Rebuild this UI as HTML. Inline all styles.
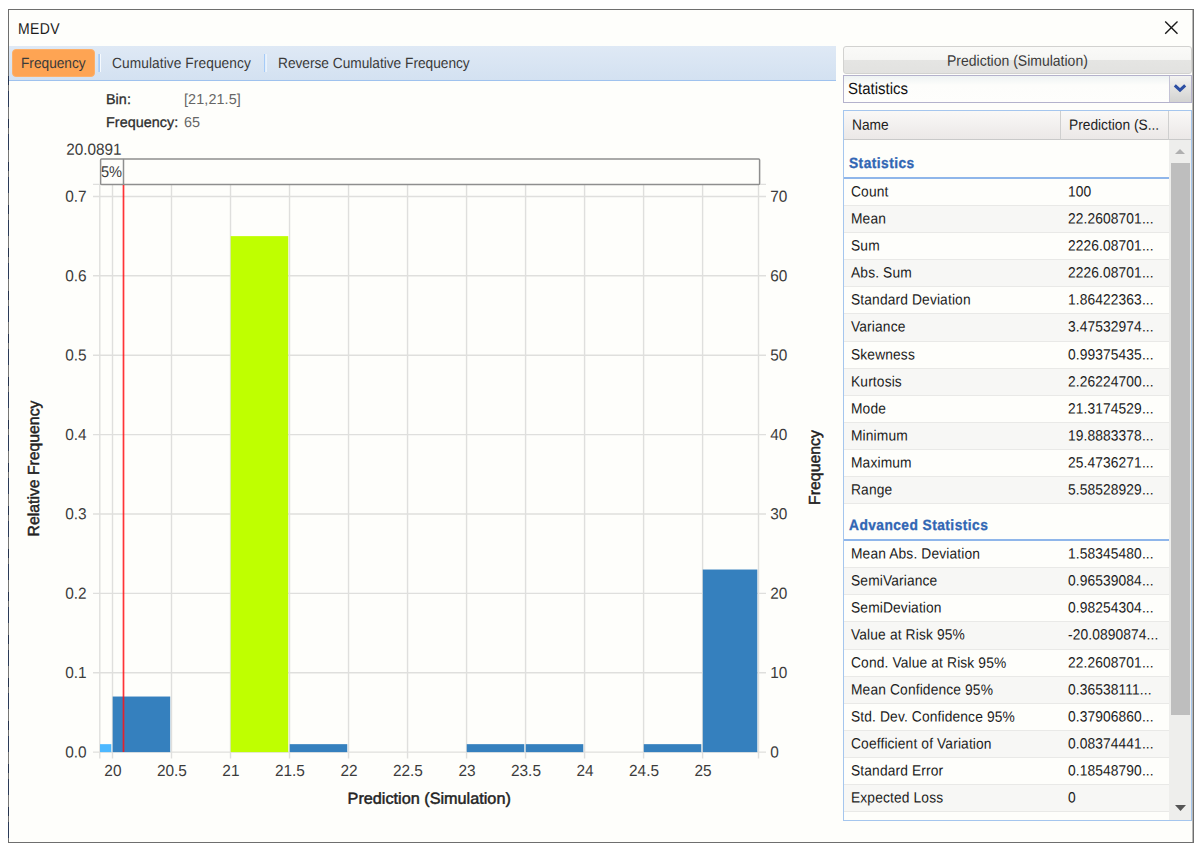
<!DOCTYPE html>
<html lang="en"><head><meta charset="utf-8"><title>MEDV</title>
<style>
*{box-sizing:border-box;margin:0;padding:0}
html,body{width:1200px;height:852px;overflow:hidden;background:#fff}
body{font-family:"Liberation Sans",sans-serif;color:#1e1e1e;position:relative}
.win{position:absolute;left:8px;top:9px;width:1186px;height:834px;border:1px solid #6e6e6e;background:#fefefb}
.abs{position:absolute;white-space:nowrap}
.lb{left:8px;top:76px;width:1px;height:764px;background:repeating-linear-gradient(#25324d 0 9px,#6e6e6e 9px 15px,#2b3a58 15px 31px,#777 31px 43px)}
.title{left:17.5px;top:20px;font-size:14px;line-height:18px;letter-spacing:0.4px;color:#1c1c1c;transform:scaleY(1.13) rotate(0.03deg);transform-origin:0 78%}
.tb{left:9px;top:46px;width:827px;height:35px;background:linear-gradient(#dfe9f5,#d3e1f1);border-bottom:1px solid #9fc2ee}
.btn{left:12px;top:49px;width:83px;height:28px;border-radius:4px;background:#fea453;border:1px solid #fdb06a}
.tbt{font-size:13.7px;line-height:16px;top:56px;color:#3a3a3a}
.sep{top:54px;width:3px;height:18px}
.sep.s1{background:linear-gradient(to right,#b4d3f7 0 1px,#a6cbf7 1px 2px,#f6fafe 2px 3px)}
.sep.s2{background:linear-gradient(to right,#a6cbf7 0 1px,#e1eefc 1px 2px,#eaf2fb 2px 3px)}
.sy{display:inline-block;transform:scaleY(1.08) rotate(0.03deg);transform-origin:0 78%}
.info{font-size:14.35px;line-height:16px;letter-spacing:0.05px;transform:rotate(0.03deg);transform-origin:0 78%;-webkit-text-stroke:0.3px #2e2e2e;color:#2e2e2e}
.infov{font-size:14.4px;line-height:16px;color:#666;letter-spacing:0.1px;transform:rotate(0.03deg);transform-origin:0 78%}
.hdr{left:843px;top:46px;width:349px;height:28px;border:1px solid #d2d2d0;border-radius:3px;background:linear-gradient(#fafaf8 0,#f6f6f4 50%,#e5e5e3 50%,#e2e2e0 100%);text-align:center;font-size:14px;line-height:27px;color:#3a3a3a}
.hdr .sy{position:relative;top:0.5px}
.th .sy{position:relative;top:0.5px}
.combo{left:843px;top:75px;width:349px;height:28px;border:1px solid #b4b2cc;background:linear-gradient(#eef3f3 0,#fdfdfb 35%,#fefefc 100%)}
.combo .t{left:4px;top:4px;font-size:15px;line-height:18px;color:#111}
.combo .dd{right:0;top:0;width:22px;height:26px;background:linear-gradient(#f3f3f1,#e4e4e2 45%,#d3d3d1);border-left:1px solid #c4c3d6}
.tbl{left:843px;top:110px;width:349px;height:711px;border:1px solid #a5c6ee;background:#fefefb;overflow:hidden}
.th{left:0;top:0;height:29px;background:linear-gradient(#f9f8f7,#ebe8e7);border-bottom:1px solid #c9c9c9;border-right:1px solid #cfcfcf;font-size:13.75px;line-height:27px;color:#222}
.rows{position:absolute;left:0;top:29px;width:325px}
.grp{height:39px;border-bottom:2px solid #8fb6ea;font-weight:bold;font-size:13.75px;letter-spacing:0.45px;color:#3166b4;-webkit-text-stroke:0.3px #3166b4;padding:15.5px 0 0 5px;line-height:16px}
.grp.g2{height:37px;padding-top:13.5px}
.row{height:27.1px;border-bottom:1px solid #e9e9e7;font-size:13.8px;line-height:16px;position:relative;color:#1c1c1c}
.row.alt{background:#f7f7f5}
.row span{position:absolute;top:5px;white-space:nowrap;transform:translateY(0.6px) scaleY(1.08) rotate(0.03deg);transform-origin:0 78%}
.row .n{left:6.9px;letter-spacing:0.13px}
.row .v{left:224px;letter-spacing:0.1px}
.sb{left:325px;top:29px;width:22px;height:680px;background:#eeeeec}
.thumb{left:2px;top:23px;width:19px;height:552px;background:#bebebe}
</style></head>
<body>
<div class="win"></div>
<div class="abs" style="left:1192px;top:10px;width:1px;height:832px;background:#b9b9b7"></div>
<div class="abs lb"></div>
<div class="abs title">MEDV</div>
<svg class="abs" style="left:1163px;top:19px" width="17" height="17" viewBox="0 0 17 17"><path d="M2.2 2.5 L14.5 14.7 M14.5 2.5 L2.2 14.7" stroke="#1a1a1a" stroke-width="1.4" fill="none"/></svg>
<div class="abs tb"></div>
<div class="abs btn"></div>
<div class="abs tbt" style="left:21px"><span class="sy">Frequency</span></div>
<div class="abs sep s1" style="left:98px"></div>
<div class="abs tbt" style="left:112.4px;letter-spacing:0.1px"><span class="sy">Cumulative Frequency</span></div>
<div class="abs sep s2" style="left:264px"></div>
<div class="abs tbt" style="left:278px"><span class="sy">Reverse Cumulative Frequency</span></div>
<div class="abs info" style="left:105.7px;top:90.7px">Bin:</div>
<div class="abs infov" style="left:183.6px;top:90.7px">[21,21.5]</div>
<div class="abs info" style="left:105.7px;top:114.2px">Frequency:</div>
<div class="abs infov" style="left:183.6px;top:114.2px">65</div>
<svg class="abs" style="left:0;top:0" width="840" height="852" viewBox="0 0 840 852" font-family="'Liberation Sans',sans-serif"><line x1="93" x2="766" y1="752.10" y2="752.10" stroke="#dfdfdd" stroke-width="1.4"/><line x1="93" x2="766" y1="672.72" y2="672.72" stroke="#dfdfdd" stroke-width="1.4"/><line x1="93" x2="766" y1="593.34" y2="593.34" stroke="#dfdfdd" stroke-width="1.4"/><line x1="93" x2="766" y1="513.96" y2="513.96" stroke="#dfdfdd" stroke-width="1.4"/><line x1="93" x2="766" y1="434.58" y2="434.58" stroke="#dfdfdd" stroke-width="1.4"/><line x1="93" x2="766" y1="355.20" y2="355.20" stroke="#dfdfdd" stroke-width="1.4"/><line x1="93" x2="766" y1="275.82" y2="275.82" stroke="#dfdfdd" stroke-width="1.4"/><line x1="93" x2="766" y1="196.44" y2="196.44" stroke="#dfdfdd" stroke-width="1.4"/><line x1="93" x2="766" y1="184.4" y2="184.4" stroke="#dfdfdd" stroke-width="1.4"/><line x1="112.50" x2="112.50" y1="184.4" y2="758.5" stroke="#dfdfdd" stroke-width="1.4"/><line x1="171.51" x2="171.51" y1="184.4" y2="758.5" stroke="#dfdfdd" stroke-width="1.4"/><line x1="230.52" x2="230.52" y1="184.4" y2="758.5" stroke="#dfdfdd" stroke-width="1.4"/><line x1="289.53" x2="289.53" y1="184.4" y2="758.5" stroke="#dfdfdd" stroke-width="1.4"/><line x1="348.54" x2="348.54" y1="184.4" y2="758.5" stroke="#dfdfdd" stroke-width="1.4"/><line x1="407.55" x2="407.55" y1="184.4" y2="758.5" stroke="#dfdfdd" stroke-width="1.4"/><line x1="466.56" x2="466.56" y1="184.4" y2="758.5" stroke="#dfdfdd" stroke-width="1.4"/><line x1="525.57" x2="525.57" y1="184.4" y2="758.5" stroke="#dfdfdd" stroke-width="1.4"/><line x1="584.58" x2="584.58" y1="184.4" y2="758.5" stroke="#dfdfdd" stroke-width="1.4"/><line x1="643.59" x2="643.59" y1="184.4" y2="758.5" stroke="#dfdfdd" stroke-width="1.4"/><line x1="702.60" x2="702.60" y1="184.4" y2="758.5" stroke="#dfdfdd" stroke-width="1.4"/><line x1="99.8" x2="99.8" y1="184.4" y2="758.5" stroke="#dfdfdd" stroke-width="1.4"/><line x1="758.5" x2="758.5" y1="184.4" y2="758.5" stroke="#dfdfdd" stroke-width="1.4"/><rect x="100.00" y="744.16" width="11.30" height="7.94" fill="#4db8ff"/><rect x="112.70" y="696.53" width="57.51" height="55.57" fill="#3580be"/><rect x="230.72" y="236.13" width="57.51" height="515.97" fill="#bfff00"/><rect x="289.73" y="744.16" width="57.51" height="7.94" fill="#3580be"/><rect x="466.76" y="744.16" width="57.51" height="7.94" fill="#3580be"/><rect x="525.77" y="744.16" width="57.51" height="7.94" fill="#3580be"/><rect x="643.79" y="744.16" width="57.51" height="7.94" fill="#3580be"/><rect x="702.80" y="569.53" width="54.50" height="182.57" fill="#3580be"/><rect x="100.6" y="158.9" width="659" height="25.6" rx="1" fill="#fefefb" stroke="#8e8e8e" stroke-width="1.5"/><line x1="123.5" x2="123.5" y1="158.9" y2="184.5" stroke="#8e8e8e" stroke-width="1.5"/><line x1="123.5" x2="123.5" y1="185" y2="752.1" stroke="#ff1216" stroke-opacity="0.86" stroke-width="1.7"/><text transform="translate(101.00,177.00) scale(1.0,1.07) rotate(0.03)" font-size="14.6" text-anchor="start" fill="#3c3c3c">5%</text><text transform="translate(66.20,154.80) scale(1.015,1.07) rotate(0.03)" font-size="15.1" text-anchor="start" fill="#3c3c3c">20.0891</text><text transform="translate(86.60,757.50) scale(1.02,1.06) rotate(0.03)" font-size="15.1" text-anchor="end" fill="#3c3c3c">0.0</text><text transform="translate(770.20,757.50) scale(1.02,1.06) rotate(0.03)" font-size="15.1" text-anchor="start" fill="#3c3c3c">0</text><text transform="translate(86.60,678.12) scale(1.02,1.06) rotate(0.03)" font-size="15.1" text-anchor="end" fill="#3c3c3c">0.1</text><text transform="translate(770.20,678.12) scale(1.02,1.06) rotate(0.03)" font-size="15.1" text-anchor="start" fill="#3c3c3c">10</text><text transform="translate(86.60,598.74) scale(1.02,1.06) rotate(0.03)" font-size="15.1" text-anchor="end" fill="#3c3c3c">0.2</text><text transform="translate(770.20,598.74) scale(1.02,1.06) rotate(0.03)" font-size="15.1" text-anchor="start" fill="#3c3c3c">20</text><text transform="translate(86.60,519.36) scale(1.02,1.06) rotate(0.03)" font-size="15.1" text-anchor="end" fill="#3c3c3c">0.3</text><text transform="translate(770.20,519.36) scale(1.02,1.06) rotate(0.03)" font-size="15.1" text-anchor="start" fill="#3c3c3c">30</text><text transform="translate(86.60,439.98) scale(1.02,1.06) rotate(0.03)" font-size="15.1" text-anchor="end" fill="#3c3c3c">0.4</text><text transform="translate(770.20,439.98) scale(1.02,1.06) rotate(0.03)" font-size="15.1" text-anchor="start" fill="#3c3c3c">40</text><text transform="translate(86.60,360.60) scale(1.02,1.06) rotate(0.03)" font-size="15.1" text-anchor="end" fill="#3c3c3c">0.5</text><text transform="translate(770.20,360.60) scale(1.02,1.06) rotate(0.03)" font-size="15.1" text-anchor="start" fill="#3c3c3c">50</text><text transform="translate(86.60,281.22) scale(1.02,1.06) rotate(0.03)" font-size="15.1" text-anchor="end" fill="#3c3c3c">0.6</text><text transform="translate(770.20,281.22) scale(1.02,1.06) rotate(0.03)" font-size="15.1" text-anchor="start" fill="#3c3c3c">60</text><text transform="translate(86.60,201.84) scale(1.02,1.06) rotate(0.03)" font-size="15.1" text-anchor="end" fill="#3c3c3c">0.7</text><text transform="translate(770.20,201.84) scale(1.02,1.06) rotate(0.03)" font-size="15.1" text-anchor="start" fill="#3c3c3c">70</text><text transform="translate(112.90,775.90) scale(1.02,1.06) rotate(0.03)" font-size="15.1" text-anchor="middle" fill="#3c3c3c">20</text><text transform="translate(171.91,775.90) scale(1.02,1.06) rotate(0.03)" font-size="15.1" text-anchor="middle" fill="#3c3c3c">20.5</text><text transform="translate(230.92,775.90) scale(1.02,1.06) rotate(0.03)" font-size="15.1" text-anchor="middle" fill="#3c3c3c">21</text><text transform="translate(289.93,775.90) scale(1.02,1.06) rotate(0.03)" font-size="15.1" text-anchor="middle" fill="#3c3c3c">21.5</text><text transform="translate(348.94,775.90) scale(1.02,1.06) rotate(0.03)" font-size="15.1" text-anchor="middle" fill="#3c3c3c">22</text><text transform="translate(407.95,775.90) scale(1.02,1.06) rotate(0.03)" font-size="15.1" text-anchor="middle" fill="#3c3c3c">22.5</text><text transform="translate(466.96,775.90) scale(1.02,1.06) rotate(0.03)" font-size="15.1" text-anchor="middle" fill="#3c3c3c">23</text><text transform="translate(525.97,775.90) scale(1.02,1.06) rotate(0.03)" font-size="15.1" text-anchor="middle" fill="#3c3c3c">23.5</text><text transform="translate(584.98,775.90) scale(1.02,1.06) rotate(0.03)" font-size="15.1" text-anchor="middle" fill="#3c3c3c">24</text><text transform="translate(643.99,775.90) scale(1.02,1.06) rotate(0.03)" font-size="15.1" text-anchor="middle" fill="#3c3c3c">24.5</text><text transform="translate(703.00,775.90) scale(1.02,1.06) rotate(0.03)" font-size="15.1" text-anchor="middle" fill="#3c3c3c">25</text><text transform="translate(429.20,803.70) scale(1.015,1.0) rotate(0.03)" font-size="16" text-anchor="middle" fill="#222" stroke="#222" stroke-width="0.45" stroke-linejoin="round">Prediction (Simulation)</text><text transform="translate(39.10,468.50) rotate(-90) scale(0.986,1.0) rotate(0.03)" font-size="16" text-anchor="middle" fill="#222" stroke="#222" stroke-width="0.45" stroke-linejoin="round">Relative Frequency</text><text transform="translate(820.00,467.50) rotate(-90) scale(0.99,1.0) rotate(0.03)" font-size="16" text-anchor="middle" fill="#222" stroke="#222" stroke-width="0.45" stroke-linejoin="round">Frequency</text></svg>
<div class="abs hdr"><span class="sy">Prediction (Simulation)</span></div>
<div class="abs combo"><div class="abs t"><span class="sy">Statistics</span></div><div class="abs dd"><svg class="abs" style="left:3.2px;top:7.7px" width="14" height="10" viewBox="0 0 14 10"><path d="M1.8 1.4 L7 6.2 L12.2 1.4" stroke="#2c4fa3" stroke-width="3" fill="none"/></svg></div></div>
<div class="abs tbl">
 <div class="abs th" style="width:217px;padding-left:7.8px"><span class="sy">Name</span></div>
 <div class="abs th" style="left:217px;width:108px;padding-left:8px"><span class="sy">Prediction (S...</span></div>
 <div class="abs th" style="left:325px;width:22px;border-right:0"></div>
 <div class="rows">
  <div class="grp"><span class="sy">Statistics</span></div>
<div class="row"><span class="n">Count</span><span class="v">100</span></div>
<div class="row alt"><span class="n">Mean</span><span class="v">22.2608701...</span></div>
<div class="row"><span class="n">Sum</span><span class="v">2226.08701...</span></div>
<div class="row alt"><span class="n">Abs. Sum</span><span class="v">2226.08701...</span></div>
<div class="row"><span class="n">Standard Deviation</span><span class="v">1.86422363...</span></div>
<div class="row alt"><span class="n">Variance</span><span class="v">3.47532974...</span></div>
<div class="row"><span class="n">Skewness</span><span class="v">0.99375435...</span></div>
<div class="row alt"><span class="n">Kurtosis</span><span class="v">2.26224700...</span></div>
<div class="row"><span class="n">Mode</span><span class="v">21.3174529...</span></div>
<div class="row alt"><span class="n">Minimum</span><span class="v">19.8883378...</span></div>
<div class="row"><span class="n">Maximum</span><span class="v">25.4736271...</span></div>
<div class="row alt"><span class="n">Range</span><span class="v">5.58528929...</span></div>
  <div class="grp g2"><span class="sy">Advanced Statistics</span></div>
<div class="row"><span class="n">Mean Abs. Deviation</span><span class="v">1.58345480...</span></div>
<div class="row alt"><span class="n">SemiVariance</span><span class="v">0.96539084...</span></div>
<div class="row"><span class="n">SemiDeviation</span><span class="v">0.98254304...</span></div>
<div class="row alt"><span class="n">Value at Risk 95%</span><span class="v">-20.0890874...</span></div>
<div class="row"><span class="n">Cond. Value at Risk 95%</span><span class="v">22.2608701...</span></div>
<div class="row alt"><span class="n">Mean Confidence 95%</span><span class="v">0.36538111...</span></div>
<div class="row"><span class="n">Std. Dev. Confidence 95%</span><span class="v">0.37906860...</span></div>
<div class="row alt"><span class="n">Coefficient of Variation</span><span class="v">0.08374441...</span></div>
<div class="row"><span class="n">Standard Error</span><span class="v">0.18548790...</span></div>
<div class="row alt"><span class="n">Expected Loss</span><span class="v">0</span></div>
 </div>
 <div class="abs sb">
  <svg class="abs" style="left:5.8px;top:9px" width="10" height="5" viewBox="0 0 10 5"><path d="M0 5 L5 0 L10 5 Z" fill="#b0b0b0"/></svg>
  <div class="abs thumb"></div>
  <svg class="abs" style="left:6px;top:665px" width="11" height="6" viewBox="0 0 11 6"><path d="M0 0 L11 0 L5.5 6 Z" fill="#555"/></svg>
 </div>
</div>
</body></html>
